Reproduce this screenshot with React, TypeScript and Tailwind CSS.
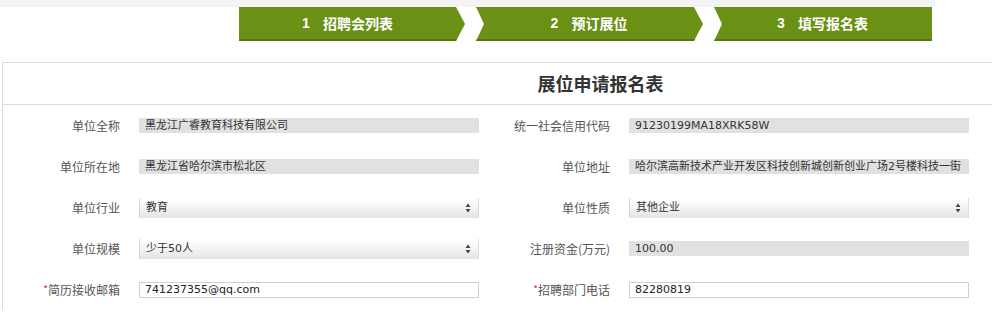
import React from 'react'

const steps = [
  { n: '1', label: '招聘会列表', w: 'w-[226px]', clip: '[clip-path:polygon(0_0,calc(100%-9px)_0,100%_50%,calc(100%-9px)_100%,0_100%)]', pl: 'pl-0' },
  { n: '2', label: '预订展位', w: 'w-[227px]', clip: '[clip-path:polygon(0_0,calc(100%-9px)_0,100%_50%,calc(100%-9px)_100%,0_100%,8px_50%)]', pl: 'pl-[8px]' },
  { n: '3', label: '填写报名表', w: 'w-[218px]', clip: '[clip-path:polygon(0_0,100%_0,100%_100%,0_100%,8px_50%)]', pl: 'pl-[8px]' },
]

const valueFont = "font-['DejaVu_Sans','Noto_Sans_CJK_SC',sans-serif]"

function ReadOnly({ value }: { value: string }) {
  return (
    <div className={`w-[340px] h-[15px] bg-[#e1e1e1] flex items-center pl-[6px] text-[11px] text-[#333] leading-none overflow-hidden whitespace-nowrap ${valueFont}`}>
      {value}
    </div>
  )
}

function Select({ value }: { value: string }) {
  return (
    <div className={`w-[340px] h-[20px] flex items-center justify-between pl-[6px] pr-[7px] text-[11px] text-[#333] leading-none bg-gradient-to-b from-white via-[#f4f4f4] to-[#e3e3e3] border-l border-[#d6d6d6] border-r border-r-[#dcdcdc] ${valueFont}`}>
      <span>{value}</span>
      <svg width="6" height="10" viewBox="0 0 6 10">
        <path d="M3 0.5 L5.5 4 L0.5 4 Z" fill="#444" />
        <path d="M3 9.5 L5.5 6 L0.5 6 Z" fill="#444" />
      </svg>
    </div>
  )
}

function TextInput({ value }: { value: string }) {
  return (
    <div className={`w-[340px] h-[16px] bg-white border border-[#cfcfcf] flex items-center pl-[5px] text-[11px] text-[#222] leading-none ${valueFont}`}>
      {value}
    </div>
  )
}

function Label({ text, required, w }: { text: string; required?: boolean; w: string }) {
  return (
    <div className={`${w} text-right text-[12px] text-[#555] pr-[19px] whitespace-nowrap`}>
      {required && <span className="text-[#e0242b] text-[10px] align-top">*</span>}
      {text}
    </div>
  )
}

type Field = { label: string; kind: 'ro' | 'select' | 'input'; value: string; required?: boolean }

const rows: [Field, Field][] = [
  [
    { label: '单位全称', kind: 'ro', value: '黑龙江广睿教育科技有限公司' },
    { label: '统一社会信用代码', kind: 'ro', value: '91230199MA18XRK58W' },
  ],
  [
    { label: '单位所在地', kind: 'ro', value: '黑龙江省哈尔滨市松北区' },
    { label: '单位地址', kind: 'ro', value: '哈尔滨高新技术产业开发区科技创新城创新创业广场2号楼科技一街' },
  ],
  [
    { label: '单位行业', kind: 'select', value: '教育' },
    { label: '单位性质', kind: 'select', value: '其他企业' },
  ],
  [
    { label: '单位规模', kind: 'select', value: '少于50人' },
    { label: '注册资金(万元)', kind: 'ro', value: '100.00' },
  ],
  [
    { label: '简历接收邮箱', kind: 'input', value: '741237355@qq.com', required: true },
    { label: '招聘部门电话', kind: 'input', value: '82280819', required: true },
  ],
]

function Control({ f }: { f: Field }) {
  if (f.kind === 'ro') return <ReadOnly value={f.value} />
  if (f.kind === 'select') return <Select value={f.value} />
  return <TextInput value={f.value} />
}

export default function App() {
  return (
    <div className="w-[992px] h-[320px] overflow-hidden bg-white font-['Noto_Sans_CJK_SC','Noto_Sans',sans-serif]">
      <div className="w-[935px] h-[7px] bg-[#f4f4f4]" />
      <div className="flex gap-[11px] pl-[239px] h-[34px]">
        {steps.map((s) => (
          <div
            key={s.n}
            className={`${s.w} ${s.clip} ${s.pl} h-[34px] bg-[#6a9015] border-b-2 border-[#557610] flex items-center justify-center text-white text-[14px] font-bold`}
          >
            <div className={s.n === '1' ? 'pr-[9px] flex items-center' : 'pr-[9px] flex items-center'}>
              <span className="font-['Liberation_Sans',sans-serif]">{s.n}</span>
              <span className="ml-[13px]">{s.label}</span>
            </div>
          </div>
        ))}
      </div>
      <div className="mt-[21px] ml-[2px] w-[1196px] border-l border-t border-[#d9d9d9]">
        <div className="h-[42px] border-b border-[#dcdcdc] flex items-center justify-center text-[18px] font-bold text-[#333]">
          展位申请报名表
        </div>
        {rows.map(([a, b], i) => (
          <div key={i} className="h-[41px] flex items-center">
            <Label text={a.label} required={a.required} w="w-[136px]" />
            <Control f={a} />
            <Label text={b.label} required={b.required} w="w-[150px]" />
            <Control f={b} />
          </div>
        ))}
      </div>
    </div>
  )
}
